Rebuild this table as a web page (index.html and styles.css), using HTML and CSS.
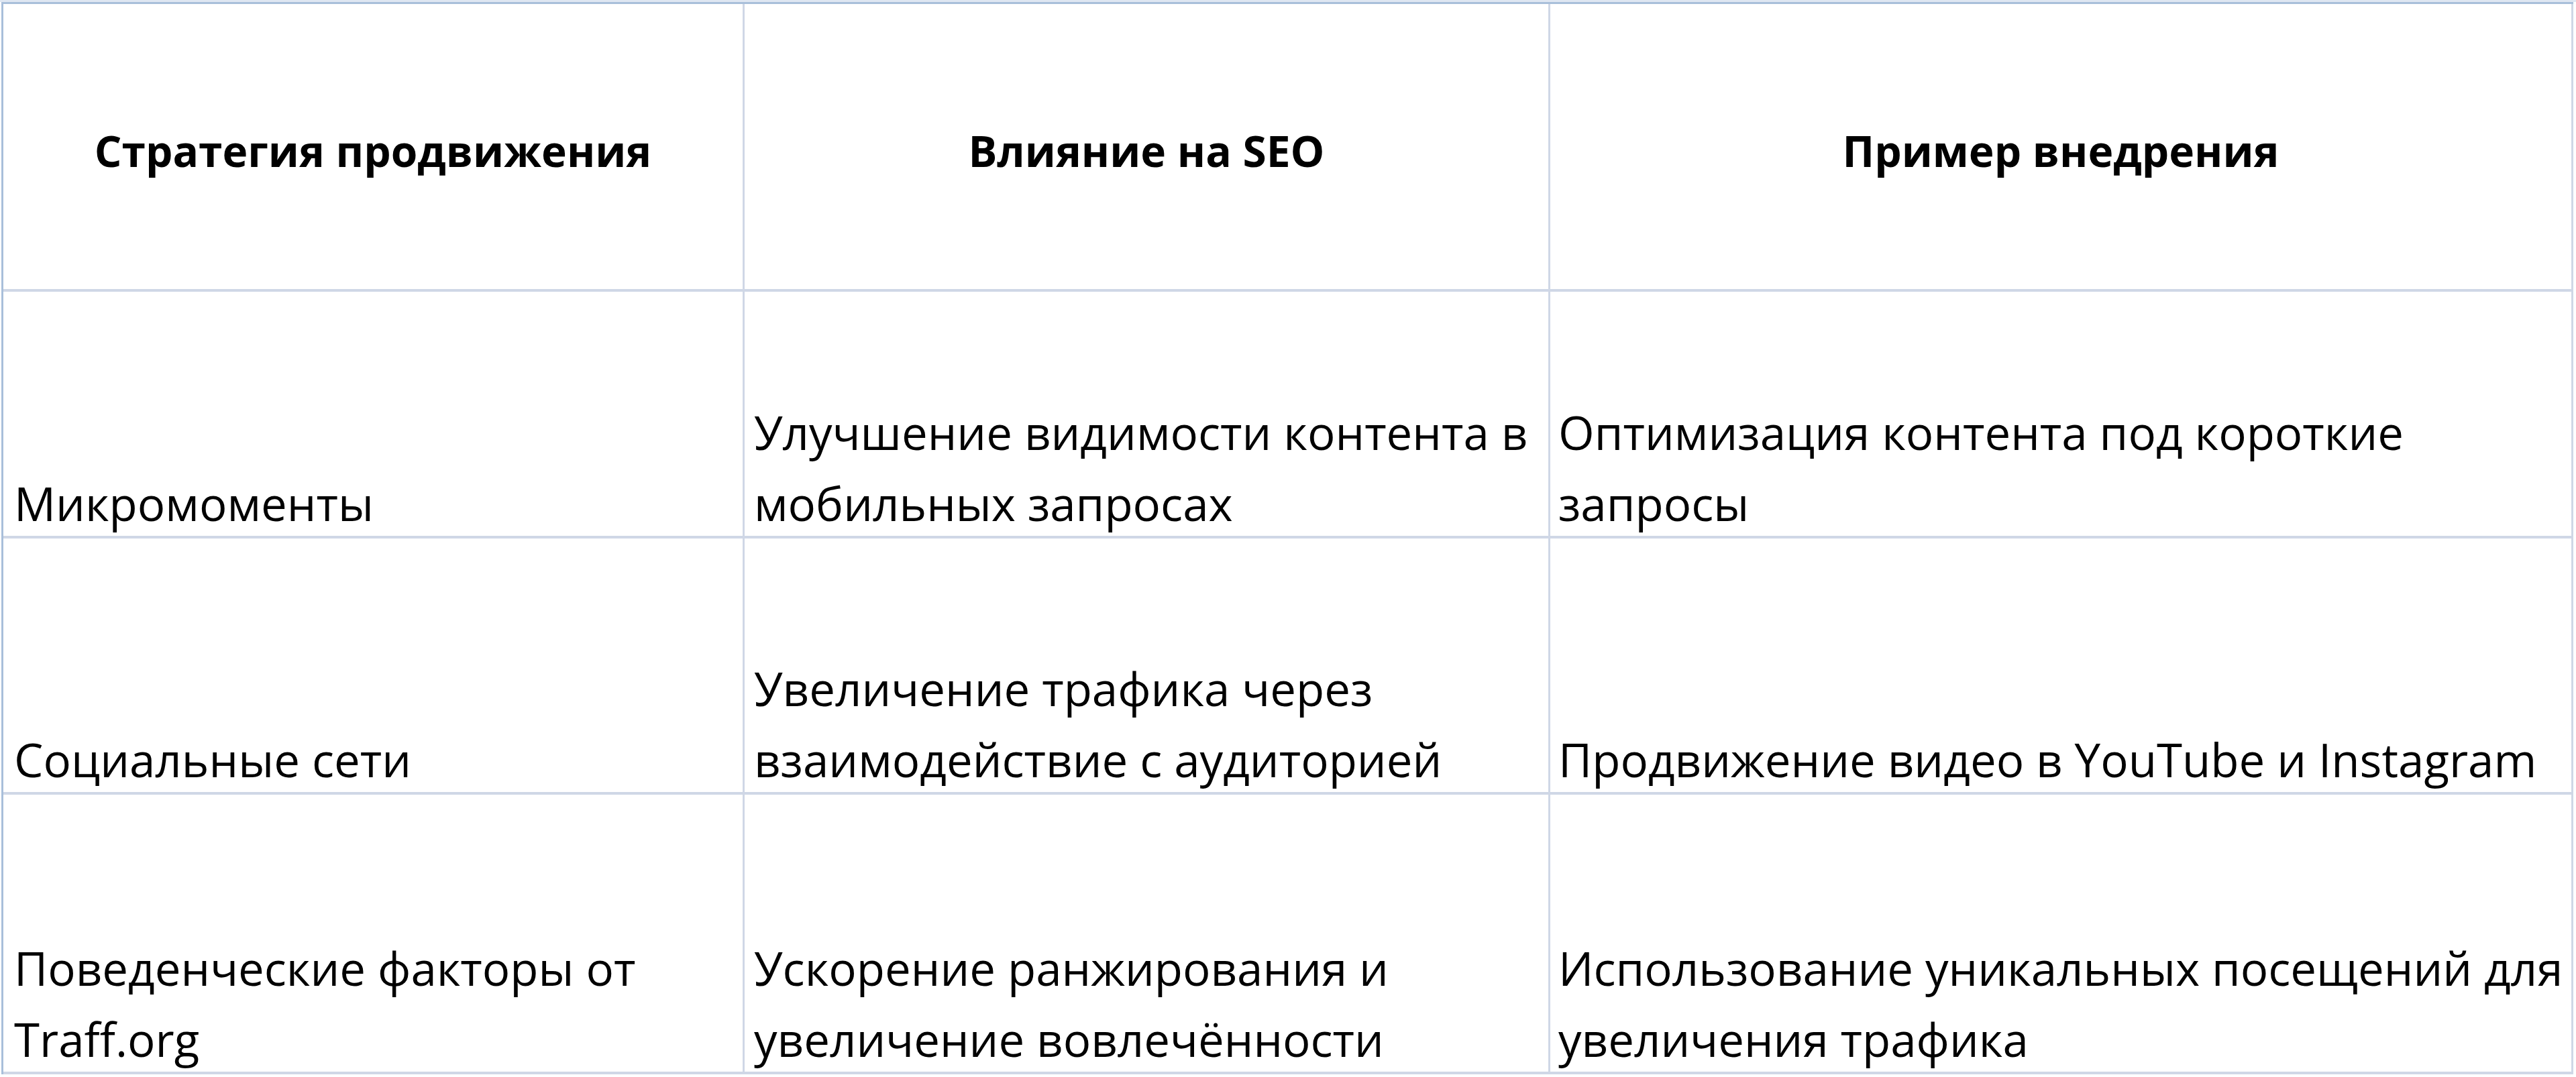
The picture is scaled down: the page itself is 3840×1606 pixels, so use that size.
FILE: index.html
```html
<!DOCTYPE html>
<html lang="ru">
<head>
<meta charset="utf-8">
<title>Стратегии продвижения</title>
<link rel="stylesheet" href="styles.css">
</head>
<body>
<div class="sheet">
  <div class="grid">
    <div class="cell head"><span class="txt">Стратегия продвижения</span></div>
    <div class="cell head"><span class="txt">Влияние на SEO</span></div>
    <div class="cell head"><span class="txt">Пример внедрения</span></div>

    <div class="cell c1"><span class="txt">Микромоменты</span></div>
    <div class="cell c2"><span class="txt">Улучшение видимости контента в<br>мобильных запросах</span></div>
    <div class="cell c3"><span class="txt">Оптимизация контента под короткие<br>запросы</span></div>

    <div class="cell c1"><span class="txt">Социальные сети</span></div>
    <div class="cell c2"><span class="txt">Увеличение трафика через<br>взаимодействие с аудиторией</span></div>
    <div class="cell c3"><span class="txt">Продвижение видео в YouTube и Instagram</span></div>

    <div class="cell c1"><span class="txt">Поведенческие факторы от<br>Traff.org</span></div>
    <div class="cell c2"><span class="txt">Ускорение ранжирования и<br>увеличение вовлечённости</span></div>
    <div class="cell c3"><span class="txt">Использование уникальных посещений для<br>увеличения трафика</span></div>
  </div>
</div>
</body>
</html>
```

FILE: styles.css
```css
* { box-sizing: border-box; }

html, body {
  margin: 0;
  padding: 0;
  background: #ffffff;
}

body {
  width: 3840px;
  height: 1606px;
  overflow: hidden;
  font-family: "Open Sans", "Noto Sans", sans-serif;
  color: #000000;
}

.sheet {
  padding-top: 3px;
  background: linear-gradient(#dfe7f2, #dfe7f2) top left / 100% 3px no-repeat;
}

.grid {
  display: grid;
  grid-template-columns: 1105px 1201px 1525px;
  grid-template-rows: 429px 368px 382px 417px;
  margin-left: 2px;
  width: max-content;
  border-top: 3px solid #a9bfda;
  border-left: 3px solid #a9bfda;
}

.cell {
  display: flex;
  flex-direction: column;
  justify-content: flex-end;
  border-right: 3px solid #cfd7e6;
  border-bottom: 4px solid #cfd7e6;
  padding: 0 10px 0 16px;
}

.txt {
  display: block;
  font-size: 69px;
  line-height: 106px;
  white-space: nowrap;
  margin-bottom: -4px;
}

.head {
  justify-content: center;
  align-items: center;
  padding: 12px 0 0 0;
}

.head .txt {
  font-size: 64px;
  font-weight: 700;
  margin-bottom: 0;
}

.c2 { padding-left: 14px; }
.c3 { padding-left: 12px; }
```
